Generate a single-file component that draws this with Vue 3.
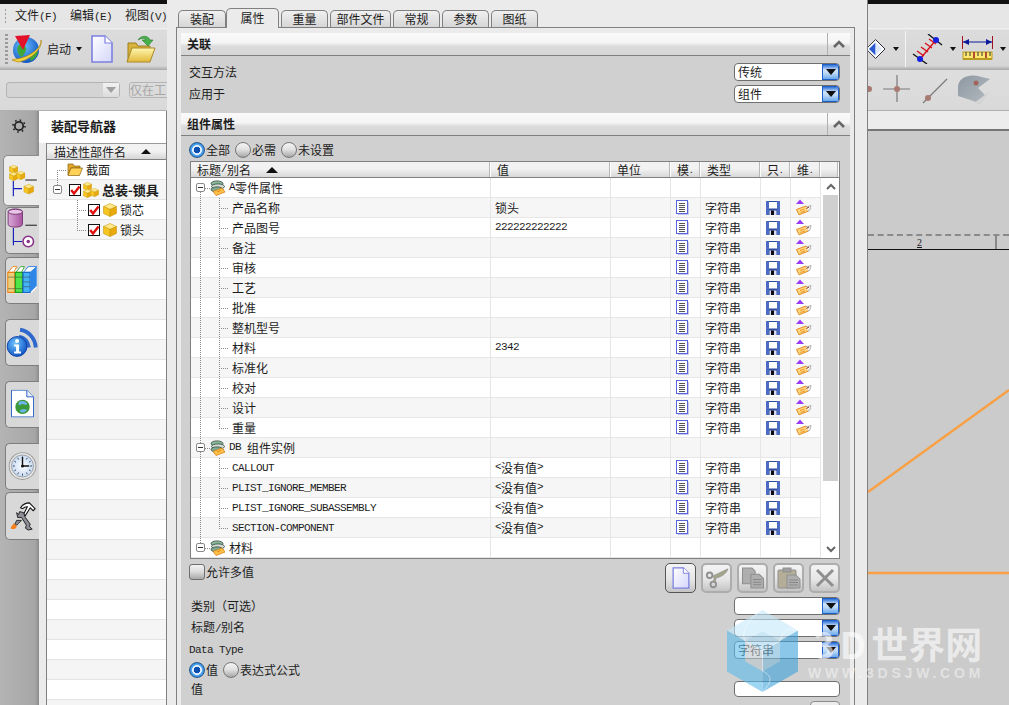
<template>
  <div class="app">
    <!-- 图标定义 -->
    <svg class="defs" aria-hidden="true">
      <defs>
        <linearGradient id="gPage" x1="0" y1="0" x2="1" y2="1"><stop offset="0" stop-color="#fff" /><stop offset="1" stop-color="#d4d6fa" /></linearGradient>
        <linearGradient id="gFolder" x1="0" y1="0" x2="0" y2="1"><stop offset="0" stop-color="#fff7b0" /><stop offset="1" stop-color="#e2b93a" /></linearGradient>
        <radialGradient id="gGlobe" cx=".4" cy=".35" r=".7"><stop offset="0" stop-color="#6fc4ff" /><stop offset="1" stop-color="#0b4fc0" /></radialGradient>
        <radialGradient id="gFace" cx=".5" cy=".5" r=".6"><stop offset="0" stop-color="#fff" /><stop offset="1" stop-color="#bcd2f0" /></radialGradient>
        <linearGradient id="gCyl" x1="0" y1="0" x2="1" y2="0"><stop offset="0" stop-color="#d9a9d6" /><stop offset="1" stop-color="#a8559f" /></linearGradient>
        <linearGradient id="gSurf" x1="0" y1="0" x2="1" y2="1"><stop offset="0" stop-color="#8e98a2" /><stop offset="1" stop-color="#b4bac0" /></linearGradient>
      </defs>
      <symbol id="cube" viewBox="0 0 14 14">
        <path d="M7 .5 13.5 3.5 7 6.5.5 3.5z" fill="#ffe98a" stroke="#c99a10" stroke-width=".6" />
        <path d="M.5 3.5 7 6.5V13.5L.5 10.5z" fill="#f7c51f" stroke="#c99a10" stroke-width=".6" />
        <path d="M13.5 3.5 7 6.5V13.5L13.5 10.5z" fill="#e9a90c" stroke="#c99a10" stroke-width=".6" />
      </symbol>
      <symbol id="asm" viewBox="0 0 16 16">
        <use href="#cube" x="0" y="0" width="9" height="9" />
        <use href="#cube" x="0" y="7" width="9" height="9" />
        <use href="#cube" x="7" y="6" width="9" height="9" />
      </symbol>
      <symbol id="folderOpen" viewBox="0 0 16 13">
        <path d="M1 1h5l1 2h6v2H4L1 12z" fill="#e2a62a" stroke="#8a6410" stroke-width=".7" />
        <path d="M4 5h11.5L12.5 12.5H1z" fill="#ffd257" stroke="#8a6410" stroke-width=".7" />
      </symbol>
      <symbol id="check" viewBox="0 0 12 12">
        <rect x=".5" y=".5" width="11" height="11" fill="#fff" stroke="#111" />
        <path d="M2.2 6 5 9.5 10.5 2.5" fill="none" stroke="#e01010" stroke-width="2.4" />
      </symbol>
      <symbol id="stack" viewBox="0 0 16 16">
        <ellipse cx="7" cy="3.500" rx="6" ry="2.600" fill="#8db79a" stroke="#2f4a3a" stroke-width=".8" />
        <ellipse cx="8" cy="6.500" rx="6.500" ry="2.600" fill="#d4dcd6" stroke="#2f4a3a" stroke-width=".8" />
        <ellipse cx="7" cy="9.500" rx="6" ry="2.600" fill="#7fa98e" stroke="#2f4a3a" stroke-width=".8" />
        <path d="M3 11.500 12 8l3 4-9 3.500z" fill="#fcc24a" stroke="#dc7f14" stroke-width=".8" />
        <path d="M7 12l4-1.600" stroke="#dc7f14" stroke-width=".8" />
      </symbol>
      <symbol id="sheet" viewBox="0 0 13 15">
        <rect x=".5" y=".5" width="11" height="13" fill="#fff" stroke="#5763dc" />
        <path d="M12.500 2v12.500H2" fill="none" stroke="#c4c8ee" />
        <path d="M3 3.500h6M3 5.500h6M3 7.500h6M3 9.500h6M3 11.500h6" stroke="#555" />
      </symbol>
      <symbol id="floppy" viewBox="0 0 14 14">
        <rect width="14" height="14" rx="1" fill="#2e4a9c" />
        <path d="M0 0h3v14H0zM11 0h3v14h-3z" fill="#4c6cc4" />
        <rect x="3" y="1" width="8" height="6.500" fill="#fff" />
        <rect x="3.500" y="9.500" width="7" height="4.500" fill="#d8dcec" />
        <rect x="5" y="9.500" width="3" height="4.500" fill="#0a0a14" />
      </symbol>
      <symbol id="tag" viewBox="0 0 16 17">
        <path d="M4 .5 8 5H0z" fill="#9a3cf6" />
        <path d="M.5 10.500 10 7l2.500 5L3 15.800z" fill="#ffd77e" stroke="#e68a1e" />
        <path d="M4 11.500 8.500 10M4.500 13.500 9 12" stroke="#e68a1e" stroke-width=".8" />
        <path d="M10 8 15 6.500 14 11 12 12" fill="#f4f4f4" stroke="#999" stroke-width=".7" />
        <path d="M10.500 9.500 13 8" stroke="#7a2a10" stroke-width="1" />
      </symbol>
      <symbol id="doc" viewBox="0 0 22 28">
        <path d="M1 1h13l7 7v19H1z" fill="url(#gPage)" stroke="#7c80e0" stroke-width="1.600" />
        <path d="M14 1v7h7" fill="#fff" stroke="#7c80e0" stroke-width="1.200" />
      </symbol>
      <symbol id="start" viewBox="0 0 30 30">
        <circle cx="14" cy="16" r="13" fill="url(#gGlobe)" />
        <path d="M6 12c3-3 7-1 8 2s-2 6-4 9c-3-1-6-6-4-11zM18 20c2-2 6-3 8-2-1 4-3 7-7 9-1-2-2-5-1-7z" fill="#3fa63a" />
        <path d="M29 6c1 7-10 17-25 19l-4 1 6 2C16 27 31 16 29 6z" fill="#f2d33a" stroke="#b48a10" stroke-width=".7" />
        <path d="M3 2 18 1 11 16z" fill="#e3122a" />
      </symbol>
      <symbol id="folderBig" viewBox="0 0 30 30">
        <path d="M2 9h8l2 3h12v15H2z" fill="#d9b23c" stroke="#9c7f22" />
        <path d="M6 14h23l-5 14H1z" fill="url(#gFolder)" stroke="#a98a2a" />
        <path d="M12 6c3-5 10-5 12 0h3l-5 6-6-6h4c-2-2-5-2-8 0z" fill="#48b04a" stroke="#2b7e30" stroke-width=".6" />
      </symbol>
      <symbol id="books" viewBox="0 0 31 29">
        <path d="M0 8 4 4h24l3-1v20l-6 6H0z" fill="#fff" />
        <path d="M1 7 6 1h4L7 7z" fill="#fff" stroke="#e88a20" />
        <path d="M9 7 14 1h4l-3 6z" fill="#fff" stroke="#3aa83a" />
        <path d="M17 7 22 1h9l-7 6z" fill="#fff" stroke="#2f7ce0" />
        <rect x=".5" y="7" width="7.500" height="21" fill="#e9cd78" stroke="#ee7c10" stroke-width="1.200" />
        <rect x="8.500" y="7" width="7.500" height="21" fill="#52e24a" stroke="#1c9a1c" stroke-width="1.200" />
        <rect x="16.500" y="7" width="7.500" height="21" fill="#45b2f4" stroke="#1766c8" stroke-width="1.200" />
        <path d="M24 7 31 1v20l-7 7z" fill="#2f86e6" />
        <path d="M1 12h7M1 24h7M9 12h7M9 24h7M17 12h7M17 17h7M17 22h7" stroke="#333" stroke-width=".5" />
      </symbol>
      <symbol id="info" viewBox="0 0 32 32">
        <path d="M14 4c8 1 15 8 16 18M13 11c5 1 9 5 10 11" fill="none" stroke="#2f68cc" stroke-width="4" />
        <circle cx="11" cy="21" r="10" fill="url(#gGlobe)" stroke="#0c3fa8" />
        <circle cx="11" cy="15.500" r="2" fill="#fff" />
        <path d="M8 19h5v7h2v2H8v-2h2v-5H8z" fill="#fff" />
      </symbol>
      <symbol id="webDoc" viewBox="0 0 24 29">
        <path d="M.5.5h16l7 7v21H.5z" fill="#fff" stroke="#2b62c4" />
        <path d="M16.500.5v7h7" fill="#e4ecfa" stroke="#2b62c4" />
        <circle cx="12" cy="18" r="7.500" fill="#3a9a3a" />
        <path d="M8 13c3-2 8-1 9 2-2 2-3 0-5 0s-2 2-4 1zM9 22c2-2 5-2 8-1-2 3-6 4-8 1z" fill="#6fb4ee" />
      </symbol>
      <symbol id="clock" viewBox="0 0 30 30">
        <circle cx="15" cy="15" r="14.500" fill="#9a9a9a" />
        <circle cx="15" cy="15" r="13.500" fill="#e4e4e4" />
        <circle cx="15" cy="15" r="11.500" fill="url(#gFace)" stroke="#777" stroke-width=".6" />
        <path d="M15 5v2M15 23v2M5 15h2M23 15h2M10 6.500l1 1.700M20 6.500l-1 1.700M6.500 10l1.700 1M23.500 10l-1.700 1M6.500 20l1.700-1M23.500 20l-1.700-1M10 23.500l1-1.700M20 23.500l-1-1.700" stroke="#345" />
        <path d="M15 5.500V15h7" fill="none" stroke="#111" stroke-width="1.500" />
        <circle cx="15" cy="15" r="1.600" fill="#111" />
      </symbol>
      <symbol id="tools" viewBox="0 0 27 31">
        <path d="M20 2c-4 0-7 2-9 5l2 1c2-2 3-2 5-2l-4 8 2 1 5-8 3 3 2-2z" fill="#fff" stroke="#111" stroke-width="1.100" />
        <path d="M7 12l1 5 4 0 5 8-1 3 3 2 4-1-3-3 1-2-5-7-2-5-4-1-1 3-1-1z" fill="#8d8d96" stroke="#111" stroke-width=".9" />
        <path d="M12 20l-3 3-2 2-2-1 2-4z" fill="#8d8d96" stroke="#111" stroke-width=".8" />
        <path d="M1 28c0-2 2-3 3-5 1 2 3 1 3 3s-2 3-4 3-2-1-2-1z" fill="#f6801c" />
      </symbol>
      <symbol id="scissors" viewBox="0 0 26 22">
        <circle cx="5" cy="8" r="3" fill="none" stroke="#8f8f8f" stroke-width="2" />
        <circle cx="9" cy="18" r="3" fill="none" stroke="#8f8f8f" stroke-width="2" />
        <path d="M8 9 25 1c-2 6-8 9-13 10l-1 5-2-1 1-4z" fill="#a4a48a" stroke="#8f8f8f" stroke-width=".7" />
      </symbol>
      <symbol id="copy" viewBox="0 0 22 21">
        <path d="M1 1h9l3 3v12H1z" fill="#aeaeae" stroke="#8f8f8f" />
        <path d="M9 7h8l4 4v9H9z" fill="#aeaeae" stroke="#8f8f8f" />
        <path d="M11 12h8M11 14.500h8M11 17h8" stroke="#888" />
      </symbol>
      <symbol id="paste" viewBox="0 0 24 22">
        <rect x="1" y="3" width="18" height="18" rx="1" fill="#b4ad98" stroke="#8f8f8f" />
        <rect x="6" y="1" width="8" height="4" fill="#9f9f9f" stroke="#8f8f8f" />
        <path d="M10 8h9l4 4v9H10z" fill="#aeaeae" stroke="#8f8f8f" />
        <path d="M12 13h9M12 15.500h9M12 18h9" stroke="#888" />
      </symbol>
    </svg>

    <!-- 左侧:主窗口与导航器 -->
    <section class="side">
      <div class="blackbar"></div>
      <div class="menu">
        <i class="grip"></i>
        <span>文件<b class="lat">(F)</b></span>
        <span>编辑<b class="lat">(E)</b></span>
        <span>视图<b class="lat">(V)</b></span>
      </div>
      <div class="toolbar">
        <i class="grip tall"></i>
        <svg class="ic-start"><use href="#start" /></svg>
        <span class="start-label">启动</span>
        <i class="caret"></i>
        <svg class="ic-doc"><use href="#doc" /></svg>
        <svg class="ic-folder"><use href="#folderBig" /></svg>
      </div>
      <div class="filter">
        <div class="dis-combo"><i class="dis-btn"></i></div>
        <div class="dis-text">仅在工</div>
      </div>

      <div class="nav">
        <div class="nav-tabs">
          <svg class="gear" viewBox="0 0 14 14">
            <circle cx="7" cy="7" r="4.200" fill="none" stroke="#222" stroke-width="1.800" />
            <circle cx="7" cy="7" r="6" fill="none" stroke="#222" stroke-width="1.600" stroke-dasharray="1.600 3.100" />
          </svg>
          <div class="vtab active">
            <svg viewBox="0 0 36 51">
              <use href="#asm" x="5" y="9" width="17" height="17" />
              <path d="M22 25h12" stroke="#111" />
              <path d="M9.500 26v16M9.500 34h9" stroke="#1420b8" stroke-width="1.200" />
              <use href="#cube" x="20" y="29" width="11" height="11" />
            </svg>
          </div>
          <div class="vtab">
            <svg viewBox="0 0 34 47">
              <path d="M2 4c0-4 15-4 15 0v13c0 4-15 4-15 0z" fill="url(#gCyl)" stroke="#7a3a78" />
              <ellipse cx="9.500" cy="4" rx="7.500" ry="2.600" fill="#e8c4e6" stroke="#7a3a78" />
              <path d="M20 18h12" stroke="#111" />
              <path d="M7.500 21v18M7.500 35h9" stroke="#1420b8" stroke-width="1.200" />
              <circle cx="23" cy="35" r="5.500" fill="#fff" stroke="#8a2f88" stroke-width="1.600" />
              <circle cx="23" cy="35" r="1.800" fill="#8a2f88" />
            </svg>
          </div>
          <div class="vtab"><svg viewBox="0 0 34 47"><use href="#books" x="1" y="8" width="31" height="29" /></svg></div>
          <div class="vtab gap"><svg viewBox="0 0 34 47"><use href="#info" x="0" y="6" width="33" height="33" /></svg></div>
          <div class="vtab gap"><svg viewBox="0 0 34 47"><use href="#webDoc" x="5" y="8" width="24" height="29" /></svg></div>
          <div class="vtab gap"><svg viewBox="0 0 34 47"><use href="#clock" x="2" y="8" width="30" height="30" /></svg></div>
          <div class="vtab tight"><svg viewBox="0 0 34 47"><use href="#tools" x="4" y="8" width="27" height="31" /></svg></div>
        </div>

        <div class="nav-panel">
          <div class="nav-title">装配导航器</div>
          <div class="nav-body">
            <div class="nav-table">
              <div class="nav-head">描述性部件名<i class="sort"></i></div>
              <div class="nav-row node-section">
                <svg class="ic-open"><use href="#folderOpen" /></svg>
                <span>截面</span>
              </div>
              <div class="nav-row alt node-root">
                <i class="minus"></i>
                <svg class="ic-check root-check"><use href="#check" /></svg>
                <svg class="ic-asm"><use href="#asm" /></svg>
                <strong>总装-锁具</strong>
              </div>
              <div class="nav-row node-leaf">
                <svg class="ic-check"><use href="#check" /></svg>
                <svg class="ic-cube"><use href="#cube" /></svg>
                <span>锁芯</span>
              </div>
              <div class="nav-row alt node-leaf end">
                <svg class="ic-check"><use href="#check" /></svg>
                <svg class="ic-cube"><use href="#cube" /></svg>
                <span>锁头</span>
              </div>
              <div v-for="n in 24" :key="n" class="nav-row" :class="{ alt: n % 2 === 0 }"></div>
            </div>
          </div>
        </div>
      </div>
    </section>

    <!-- 中间:属性对话框 -->
    <section class="dialog">
      <div class="tabs">
        <div v-for="tab in tabs" :key="tab" class="tab" :class="{ on: tab === '属性', wide: tab.length > 2 }">{{ tab }}</div>
      </div>
      <div class="frame">
        <div class="sec-head">
          <span>关联</span>
          <div class="chev"><svg viewBox="0 0 12 8"><path d="M1 7 6 2l5 5" fill="none" stroke="#666" stroke-width="2.600" /></svg></div>
        </div>
        <div class="sec-assoc">
          <div class="form-row">
            <span>交互方法</span>
            <div class="combo"><span>传统</span><i class="combo-btn"></i></div>
          </div>
          <div class="form-row">
            <span>应用于</span>
            <div class="combo"><span>组件</span><i class="combo-btn"></i></div>
          </div>
        </div>
        <div class="sec-head">
          <span>组件属性</span>
          <div class="chev"><svg viewBox="0 0 12 8"><path d="M1 7 6 2l5 5" fill="none" stroke="#666" stroke-width="2.600" /></svg></div>
        </div>
        <div class="sec-attrs">
          <div class="radios">
            <label><i class="radio on"></i>全部</label>
            <label><i class="radio"></i>必需</label>
            <label><i class="radio"></i>未设置</label>
          </div>

          <div class="table">
            <div class="thead">
              <div class="th">标题<b class="lat">/</b>别名<i class="sort big"></i></div>
              <div class="th">值</div>
              <div class="th">单位</div>
              <div class="th">模<b class="dot">.</b></div>
              <div class="th">类型</div>
              <div class="th">只<b class="dot">.</b></div>
              <div class="th">维<b class="dot">.</b></div>
              <div class="th"></div>
            </div>
            <div class="tbody">
              <div class="rows">
                <div v-for="(row, i) in rows" :key="i" class="row" :class="{ alt: i % 2 === 1 }">
                  <div v-if="row.group" class="cell title group" :class="{ first: i === 0, last: i === rows.length - 1 }">
                    <i class="minus"></i>
                    <svg class="ic-stack"><use href="#stack" /></svg>
                    <b v-if="row.prefix" class="lat">{{ row.prefix }}</b>{{ row.name }}
                  </div>
                  <div v-else class="cell title child" :class="{ last: row.last, lat: row.latin }">{{ row.name }}</div>
                  <div class="cell value">
                    <template v-if="row.none"><b class="lat">&lt;</b>没有值<b class="lat">&gt;</b></template>
                    <template v-else-if="row.value && /^\d+$/.test(row.value)"><b class="lat">{{ row.value }}</b></template>
                    <template v-else>{{ row.value }}</template>
                  </div>
                  <div class="cell"></div>
                  <div class="cell center"><svg v-if="!row.group" class="ic-sheet"><use href="#sheet" /></svg></div>
                  <div class="cell type">{{ row.group ? '' : '字符串' }}</div>
                  <div class="cell center"><svg v-if="!row.group" class="ic-floppy"><use href="#floppy" /></svg></div>
                  <div class="cell center"><svg v-if="!row.group && !row.latin" class="ic-tag"><use href="#tag" /></svg></div>
                </div>
              </div>
              <div class="scroll">
                <div class="sbtn"><svg viewBox="0 0 10 7"><path d="M1 6 5 2l4 4" fill="none" stroke="#666" stroke-width="2" /></svg></div>
                <div class="thumb"></div>
                <div class="sbtn"><svg viewBox="0 0 10 7"><path d="M1 1l4 4 4-4" fill="none" stroke="#666" stroke-width="2" /></svg></div>
              </div>
            </div>
          </div>

          <div class="actions">
            <label class="multi"><i class="checkbox"></i>允许多值</label>
            <div class="btns">
              <div class="tbtn lead"><svg class="ic-b-doc"><use href="#doc" /></svg></div>
              <div class="tbtn"><svg class="ic-b"><use href="#scissors" /></svg></div>
              <div class="tbtn"><svg class="ic-b"><use href="#copy" /></svg></div>
              <div class="tbtn"><svg class="ic-b"><use href="#paste" /></svg></div>
              <div class="tbtn">
                <svg class="ic-b" viewBox="0 0 22 22"><path d="M3 3l16 16M19 3 3 19" stroke="#8f8f8f" stroke-width="3" /></svg>
              </div>
            </div>
          </div>

          <div class="form-row tight">
            <span>类别（可选）</span>
            <div class="combo"><i class="combo-btn"></i></div>
          </div>
          <div class="form-row tight">
            <span>标题<b class="lat">/</b>别名</span>
            <div class="combo"><i class="combo-btn"></i></div>
          </div>
          <div class="form-row tight">
            <span class="lat datatype">Data Type</span>
            <div class="combo"><span>字符串</span><i class="combo-btn"></i></div>
          </div>
          <div class="radios second">
            <label><i class="radio on"></i>值</label>
            <label><i class="radio"></i>表达式公式</label>
          </div>
          <div class="form-row input-row">
            <span>值</span>
            <div class="combo plain"></div>
          </div>
          <div class="bottom-btn-row"><div class="bottom-btn"></div></div>
        </div>
      </div>
    </section>

    <!-- 右侧:绘图区 -->
    <section class="side right">
      <div class="blackbar"></div>
      <div class="menu"></div>
      <div class="toolbar rt">
        <svg class="ic-diamond" viewBox="0 0 18 20">
          <path d="M8 0 18 10 8 20-2 10z" fill="#fff" stroke="#223" />
          <path d="M8 3v14L1 10z" fill="#2c5ad0" />
          <path d="M8 3 15 10 8 17z" fill="#dfe8fb" />
        </svg>
        <i class="caret c1"></i>
        <i class="sep"></i>
        <svg class="ic-rule" viewBox="0 0 31 30">
          <path d="M1 20 15 30M16 0 30 11" stroke="#111" stroke-width="1.300" />
          <path d="M8 25 24 6M5 17l7 5M9 13l7 5M13 9l7 5M17 5l7 5" stroke="#d8101c" stroke-width="1.400" />
          <circle cx="8" cy="25" r="3" fill="#1420e0" />
          <circle cx="24" cy="6" r="3" fill="#1420e0" />
        </svg>
        <i class="caret c2"></i>
        <svg class="ic-dim" viewBox="0 0 31 29">
          <path d="M.5 1v13M30.500 1v13" stroke="#a01020" />
          <path d="M1 7h29" stroke="#0a1a9a" />
          <path d="M1 7 7 4v6zM30 7l-6-3v6z" fill="#0a1a9a" />
          <rect x="1" y="17" width="29" height="7" fill="#ffe770" stroke="#b89a20" />
          <path d="M1 24h29" stroke="#b89a20" stroke-width="2" />
          <path d="M4 17v4M8 17v4M12 17v6M16 17v4M20 17v4M24 17v6M28 17v4" stroke="#333" />
          <path d="M12 17v6M24 17v6" stroke="#d01010" />
        </svg>
        <i class="caret c2"></i>
      </div>
      <div class="filter rt">
        <svg class="snap" viewBox="0 0 141 41">
          <circle cx="1" cy="19" r="3" fill="#a87a72" />
          <path d="M15 19h27M29 5v27M55 33 79 9" stroke="#7a7a7a" stroke-width="1.200" />
          <circle cx="29" cy="19" r="3" fill="#a87a72" />
          <circle cx="60" cy="28" r="3" fill="#a87a72" />
          <path d="M90 16c1-8 10-12 20-10 3 1 8 2 12 3l-12 9 8 8-6 8c-8-4-16-6-22-8z" fill="url(#gSurf)" />
          <path d="M122 21 118 27 112 34 106 33z" fill="#d4d4d4" />
          <circle cx="108" cy="13" r="2.500" fill="#a0665e" />
        </svg>
      </div>
      <div class="strip"></div>
      <div class="canvas">
        <svg class="geometry" viewBox="0 0 141 574">
          <path d="M0 361 141 259" stroke="#f9a044" stroke-width="2.400" fill="none" />
          <path d="M0 442H141" stroke="#f9a044" stroke-width="2.400" fill="none" />
        </svg>
        <div class="ruler">
          <span class="ruler-num">2</span>
          <i class="ruler-tick"></i>
        </div>
      </div>
    </section>

    <!-- 水印 -->
    <div class="watermark">
      <svg class="wm-logo" viewBox="0 0 71 82">
        <g opacity=".6">
          <path d="M0 20.500 35.500 0 71 20.500 53 31 35.500 21 18 31z" fill="#c4e8fb" />
          <path d="M0 20.500 18 31V51L35.500 61V82L0 61.500z" fill="#5cbcec" />
          <path d="M71 20.500V61.500L35.500 82V61L53 51V31z" fill="#3ea2da" />
          <path d="M18 31 35.500 21 53 31 35.500 41z" fill="#a8d8f2" />
          <path d="M18 31 35.500 41V61L18 51z" fill="#bcc8ce" />
          <path d="M53 31 35.500 41V61L53 51z" fill="#7cb8d8" />
        </g>
        <path d="M18 31 35.500 41 53 31M35.500 41V61M35.500 0C20 10 14 22 18 31M71 20.500C60 16 56 22 53 31M35.500 82C45 72 46 66 35.500 61" fill="none" stroke="#fff" stroke-width=".8" opacity=".6" />
      </svg>
      <div class="wm-text">
        <div class="wm-title"><span class="wm-3d">3D</span>世界网</div>
        <div class="wm-url">WWW.3DSJW.COM</div>
      </div>
    </div>
  </div>
</template>

<script setup>
const tabs = ['装配', '属性', '重量', '部件文件', '常规', '参数', '图纸']

const partAttrs = ['产品名称', '产品图号', '备注', '审核', '工艺', '批准', '整机型号', '材料', '标准化', '校对', '设计', '重量']
const partValues = { 产品名称: '锁头', 产品图号: '222222222222', 材料: '2342' }
const instanceAttrs = ['CALLOUT', 'PLIST_IGNORE_MEMBER', 'PLIST_IGNORE_SUBASSEMBLY', 'SECTION-COMPONENT']

const rows = [
  { group: true, prefix: 'A', name: '零件属性' },
  ...partAttrs.map((name, i) => ({ name, value: partValues[name], last: i === partAttrs.length - 1 })),
  { group: true, prefix: 'DB ', name: '组件实例' },
  ...instanceAttrs.map((name, i) => ({ name, latin: true, none: true, last: i === instanceAttrs.length - 1 })),
  { group: true, name: '材料' }
]
</script>

<style scoped>
.app {
  --dots-v: repeating-linear-gradient(to bottom, #8a8a8a 0 1px, transparent 1px 2px);
  --dots-h: repeating-linear-gradient(to right, #8a8a8a 0 1px, transparent 1px 2px);
  position: relative;
  display: grid;
  grid-template-columns: 167px 701px 141px;
  width: 1009px;
  height: 705px;
  overflow: hidden;
  font-family: "Noto Sans CJK SC", "Liberation Sans", sans-serif;
  font-size: 12px;
  line-height: 1;
  color: #1c1c1c;
  background: #ebebeb;
}

.defs {
  position: absolute;
  width: 0;
  height: 0;
}

svg {
  display: block;
  flex-shrink: 0;
}

.lat {
  font-family: "Liberation Mono", "DejaVu Sans Mono", monospace;
  font-size: 11px;
  font-weight: 400;
  letter-spacing: -0.6px;
}

/* 左右共用的顶部栏 */
.side {
  display: flex;
  flex-direction: column;
  min-width: 0;
  overflow: hidden;
}

.blackbar {
  height: 4px;
  background: #111;
  flex-shrink: 0;
}

.menu {
  display: flex;
  align-items: center;
  gap: 13px;
  height: 24px;
  flex-shrink: 0;
  padding-left: 5px;
  background: #e6e6e6;
  white-space: nowrap;
}

.menu span:first-of-type {
  margin-left: -10px;
}

.grip {
  width: 3px;
  height: 15px;
  margin-right: 6px;
  background: repeating-linear-gradient(to bottom, #9a9a9a 0 2px, transparent 2px 4px);
}

.grip.tall {
  height: 30px;
  margin: 0;
}

.toolbar {
  display: flex;
  align-items: center;
  height: 42px;
  flex-shrink: 0;
  padding-left: 5px;
  background: linear-gradient(#f0f0f0 0 1px, #dcdcdc 2px, #d6d6d6 90%, #a8a8a8);
  white-space: nowrap;
}

.ic-start {
  width: 30px;
  height: 30px;
  margin-left: 4px;
}

.start-label {
  margin-left: 5px;
}

.caret {
  width: 0;
  height: 0;
  margin-left: 5px;
  border: 3px solid transparent;
  border-top: 4px solid #111;
  border-bottom: 0;
}

.ic-doc {
  width: 22px;
  height: 28px;
  margin-left: 9px;
}

.ic-folder {
  width: 30px;
  height: 30px;
  margin-left: 13px;
}

.filter {
  display: flex;
  align-items: center;
  height: 41px;
  flex-shrink: 0;
  padding-left: 6px;
  background: linear-gradient(#dedede, #d9d9d9);
  border-bottom: 1px solid #b0b0b0;
  box-sizing: border-box;
}

.dis-combo {
  display: flex;
  justify-content: flex-end;
  width: 114px;
  height: 16px;
  flex-shrink: 0;
  box-sizing: border-box;
  border: 1px solid #b4b4b4;
  border-radius: 3px;
  background: #d4d4d4;
}

.dis-btn {
  width: 16px;
  background: linear-gradient(#f2f2f2, #dcdcdc);
}

.dis-btn::after {
  content: "";
  display: block;
  width: 0;
  margin: 4px auto 0;
  border: 5px solid transparent;
  border-top: 6px solid #a0a0a0;
  border-bottom: 0;
}

.dis-text {
  margin-left: 9px;
  width: 42px;
  height: 16px;
  line-height: 14px;
  flex-shrink: 0;
  box-sizing: border-box;
  border: 1px solid #b4b4b4;
  border-radius: 3px;
  color: #a6a6a6;
  white-space: nowrap;
}

/* 导航器 */
.nav {
  display: flex;
  flex: 1;
  min-height: 0;
}

.nav-tabs {
  width: 39px;
  flex-shrink: 0;
  padding-top: 8px;
  box-sizing: border-box;
  background: linear-gradient(to right, #b4b4b4, #a6a6a6 90%, #8c8c8c);
}

.gear {
  width: 14px;
  height: 14px;
  margin: 0 0 22px 12px;
}

.vtab {
  width: 34px;
  height: 47px;
  margin-left: 5px;
  box-sizing: border-box;
  border: 1px solid #7d7d7d;
  border-right: 0;
  border-radius: 5px 0 0 5px;
  background: #d8d8d8;
  margin-top: 1px;
}

.vtab + .vtab {
  margin-top: 3px;
}

.vtab svg {
  width: 100%;
  height: 100%;
}

.vtab.active {
  width: 36px;
  height: 51px;
  margin: 0 0 0 3px;
  background: #ececec;
  border-color: #8c8c8c;
}

.vtab.active + .vtab {
  margin-top: 1px;
}

.vtab.gap {
  margin-top: 15px;
}

.vtab.tight {
  height: 48px;
  margin-top: 2px;
}

.nav-panel {
  flex: 1;
  display: flex;
  flex-direction: column;
  min-width: 0;
  background: #fff;
  border-right: 1px solid #808080;
}

.nav-title {
  height: 32px;
  line-height: 30px;
  padding-left: 12px;
  font-size: 13px;
  font-weight: 700;
  white-space: nowrap;
  flex-shrink: 0;
}

.nav-body {
  flex: 1;
  min-height: 0;
  padding-left: 7px;
  background: #ebebeb;
}

.nav-table {
  height: 100%;
  overflow: hidden;
  background: #fff;
  border-left: 1px solid #808080;
}

.nav-head {
  display: flex;
  align-items: center;
  height: 17px;
  box-sizing: border-box;
  padding-left: 7px;
  border-top: 1px solid #9a9a9a;
  border-bottom: 1px solid #808080;
  background: linear-gradient(#f2f2f2, #f2f2f2 45%, #d6d6d6);
  white-space: nowrap;
}

.sort {
  width: 0;
  height: 0;
  margin-left: 15px;
  border: 5px solid transparent;
  border-bottom: 5px solid #111;
  border-top: 0;
}

.sort.big {
  margin-left: 15px;
  border-width: 0 6px 6px;
}

.nav-row {
  display: flex;
  align-items: center;
  height: 20px;
  box-sizing: border-box;
  border-bottom: 1px solid #e4e4e4;
  background-color: #fff;
  white-space: nowrap;
  background-repeat: no-repeat;
}

.nav-row.alt {
  background-color: #f5f5f5;
}

.node-section {
  padding-left: 20px;
  background-image: var(--dots-h), var(--dots-v);
  background-position: 10px 10px, 10px 10px;
  background-size: 10px 1px, 1px 10px;
}

.ic-open {
  width: 16px;
  height: 13px;
  margin-right: 3px;
}

.node-root {
  padding-left: 6px;
  background-image: var(--dots-v);
  background-position: 10px 0;
  background-size: 1px 6px;
}

.node-root .minus {
  margin-right: 7px;
}

.root-check {
  margin-right: 2px;
}

.ic-asm {
  width: 16px;
  height: 16px;
  margin-right: 3px;
}

.node-root strong {
  font-size: 13px;
  font-weight: 700;
}

.node-leaf {
  padding-left: 41px;
  background-image: var(--dots-h), var(--dots-v);
  background-position: 30px 10px, 30px 0;
  background-size: 10px 1px, 1px 100%;
}

.node-leaf.end {
  background-size: 10px 1px, 1px 10px;
}

.ic-check {
  width: 12px;
  height: 12px;
}

.ic-cube {
  width: 14px;
  height: 14px;
  margin: 0 3px;
}

.minus {
  display: block;
  width: 9px;
  height: 9px;
  flex-shrink: 0;
  box-sizing: border-box;
  border: 1px solid #8a8a8a;
  border-radius: 2px;
  background: #fff;
}

.minus::after {
  content: "";
  display: block;
  height: 1px;
  margin: 3px 1px 0;
  background: #333;
}

/* 对话框 */
.dialog {
  display: flex;
  flex-direction: column;
  min-width: 0;
  padding: 8px 12px 0 9px;
  border-right: 1px solid #808080;
  background: #ebebeb;
  overflow: hidden;
}

.tabs {
  display: flex;
  align-items: flex-end;
  height: 19px;
  flex-shrink: 0;
  padding-left: 2px;
}

.tab {
  height: 17px;
  line-height: 15px;
  padding: 0 10.5px;
  margin-left: 2px;
  box-sizing: border-box;
  border: 1px solid #808080;
  border-bottom: 0;
  border-radius: 5px 5px 0 0;
  background: linear-gradient(#f0f0f0, #d6d6d6);
  white-space: nowrap;
}

.tab:first-child {
  margin-left: 0;
  padding: 0 11px;
}

.tab.wide {
  padding: 0 5.5px;
}

.tab.on {
  position: relative;
  z-index: 1;
  height: 20px;
  line-height: 17px;
  margin-left: 0;
  margin-bottom: -1px;
  padding: 0 13.5px;
  background: #ebebeb;
}

.frame {
  flex: 1;
  min-height: 0;
  display: flex;
  flex-direction: column;
  padding: 5px 4px 0;
  border: 1px solid #808080;
  border-bottom: 0;
}

.sec-head {
  display: flex;
  align-items: center;
  justify-content: space-between;
  height: 23px;
  flex-shrink: 0;
  box-sizing: border-box;
  padding-left: 6px;
  border-bottom: 1px solid #808080;
  background: linear-gradient(#fafafa, #f4f4f4 45%, #dcdcdc 60%, #d6d6d6);
  font-weight: 700;
}

.chev {
  display: flex;
  align-items: center;
  justify-content: center;
  width: 23px;
  height: 100%;
  box-sizing: border-box;
  border-left: 1px solid #b0b0b0;
}

.chev svg {
  width: 12px;
  height: 8px;
}

.sec-assoc {
  display: flex;
  flex-direction: column;
  gap: 4px;
  height: 57px;
  flex-shrink: 0;
  box-sizing: border-box;
  padding: 7px 10px 0 8px;
  background: #d0d0d0;
}

.form-row {
  display: flex;
  align-items: center;
  justify-content: space-between;
  height: 18px;
}

.combo {
  display: flex;
  align-items: center;
  width: 106px;
  height: 18px;
  box-sizing: border-box;
  padding-left: 3px;
  border: 1px solid #6f6f6f;
  border-radius: 4px;
  background: #fff;
  overflow: hidden;
}

.combo.plain {
  height: 16px;
}

.combo span {
  flex: 1;
}

.combo-btn {
  width: 17px;
  height: 100%;
  margin-left: auto;
  flex-shrink: 0;
  box-sizing: border-box;
  border: 1px solid #1f5fc8;
  background: linear-gradient(#2f72d8, #cfe3fa 35%, #bcd8f6 60%, #6aa8ea);
}

.combo-btn::after {
  content: "";
  display: block;
  width: 0;
  margin: 4px auto 0;
  border: 5.5px solid transparent;
  border-top: 6px solid #111;
  border-bottom: 0;
}

.sec-attrs {
  flex: 1;
  min-height: 0;
  display: flex;
  flex-direction: column;
  padding: 6px 10px 0 8px;
  background: #d0d0d0;
}

.radios {
  display: flex;
  align-items: center;
  gap: 5px;
  height: 16px;
  flex-shrink: 0;
  margin-bottom: 3px;
}

.radios label {
  display: flex;
  align-items: center;
  gap: 1px;
}

.radio {
  display: block;
  width: 16px;
  height: 16px;
  box-sizing: border-box;
  border: 1px solid #777;
  border-radius: 50%;
  background: linear-gradient(#f4f4f4, #e2e2e2 45%, #a8a8a8);
}

.radio.on {
  border-color: #2a5a8e;
  background: radial-gradient(circle, #0c4fae 0 3px, #e8f3ff 3.6px 4.6px, #58aaf0 5.2px, #1f78cc 8px);
}

.table {
  flex-shrink: 0;
  margin-left: 1px;
  border: 1px solid #808080;
  background: #fff;
}

.thead,
.row {
  display: grid;
  grid-template-columns: 300px 120px 60px 30px 60px 30px 30px;
}

.thead {
  grid-template-columns: 300px 120px 60px 30px 60px 30px 30px 18px;
  height: 16px;
  box-sizing: border-box;
  border-bottom: 1px solid #808080;
  background: linear-gradient(#f2f2f2, #f2f2f2 45%, #d8d8d8);
}

.th {
  display: flex;
  align-items: center;
  padding-left: 6px;
  box-sizing: border-box;
  border-right: 1px solid #fff;
  box-shadow: inset -1px 0 0 #b8b8b8;
  white-space: nowrap;
}

.dot {
  font-weight: 400;
  font-size: 9px;
  margin-left: 1px;
}

.tbody {
  display: flex;
}

.rows {
  width: 630px;
  flex-shrink: 0;
}

.row {
  height: 20px;
  background: #fff;
}

.row.alt {
  background: #f6f6f6;
}

.cell {
  display: flex;
  align-items: center;
  box-sizing: border-box;
  border-right: 1px solid #e6e6e6;
  border-bottom: 1px solid #e6e6e6;
  white-space: pre;
  background-repeat: no-repeat;
}

.title.child {
  padding-left: 41px;
  background-image: var(--dots-v), var(--dots-v), var(--dots-h);
  background-position: 9px 0, 28px 0, 28px 10px;
  background-size: 1px 100%, 1px 100%, 10px 1px;
}

.title.child.lat {
  padding-top: 2px;
}

.title.child.last {
  background-size: 1px 100%, 1px 10px, 10px 1px;
}

.title.group {
  padding-left: 5px;
  background-image: var(--dots-v), var(--dots-h);
  background-position: 9px 0, 14px 10px;
  background-size: 1px 100%, 6px 1px;
}

.title.group.first {
  background-position: 9px 10px, 14px 10px;
}

.title.group.last {
  background-size: 1px 10px, 6px 1px;
}

.ic-stack {
  width: 16px;
  height: 16px;
  margin: 0 3px 0 5px;
}

.value {
  padding-left: 4px;
}

.type {
  padding-left: 4px;
}

.center {
  justify-content: flex-start;
  padding-left: 5px;
}

.ic-sheet {
  width: 13px;
  height: 15px;
}

.ic-floppy {
  width: 14px;
  height: 14px;
}

.ic-tag {
  width: 16px;
  height: 17px;
}

.scroll {
  display: flex;
  flex-direction: column;
  width: 18px;
  box-sizing: border-box;
  padding-left: 2px;
  padding-right: 1px;
}

.sbtn {
  display: flex;
  align-items: center;
  justify-content: center;
  height: 17px;
  flex-shrink: 0;
}

.sbtn svg {
  width: 10px;
  height: 7px;
}

.thumb {
  height: 286px;
  background: #d0d0d0;
}

.sbtn:last-child {
  margin-top: auto;
}

.actions {
  display: flex;
  justify-content: space-between;
  height: 30px;
  margin-top: 4px;
  flex-shrink: 0;
}

.multi {
  display: flex;
  align-items: flex-start;
  gap: 1px;
  line-height: 16px;
  margin-top: 1px;
}

.checkbox {
  display: block;
  width: 16px;
  height: 16px;
  box-sizing: border-box;
  border: 1px solid #6f6f6f;
  border-radius: 3px;
  background: linear-gradient(#f2f2f2, #dedede 45%, #a8a8a8);
}

.btns {
  display: flex;
  gap: 5px;
}

.tbtn {
  display: flex;
  align-items: center;
  justify-content: center;
  width: 31px;
  height: 30px;
  box-sizing: border-box;
  border: 2px solid #adadad;
  border-radius: 5px;
  background: linear-gradient(#f4f4f4, #e6e6e6 55%, #c4c4c4);
}

.tbtn.lead {
  border: 1px solid #555;
}

.ic-b {
  width: 24px;
  height: 22px;
}

.ic-b-doc {
  width: 18px;
  height: 22px;
}

.form-row.tight {
  margin-top: 4px;
  margin-left: 2px;
}

.datatype {
  margin-left: -2px;
}

.radios.second {
  margin: 3px 0 0;
}

.input-row {
  height: 16px;
  margin: 3px 0 0 2px;
}

.bottom-btn-row {
  display: flex;
  justify-content: flex-end;
  margin-top: 4px;
}

.bottom-btn {
  width: 30px;
  height: 16px;
  box-sizing: border-box;
  border: 1px solid #8a8a8a;
  border-radius: 4px;
  background: #ececec;
}

/* 右侧工具条 */
.toolbar.rt {
  padding-left: 0;
}

.ic-diamond {
  width: 17px;
  height: 20px;
}

.c1 {
  margin-left: 8px;
}

.c2 {
  margin-left: 7px;
}

.sep {
  width: 1px;
  height: 36px;
  margin-left: 6px;
  background: #f4f4f4;
}

.ic-rule {
  width: 31px;
  height: 30px;
  margin-left: 6px;
}

.ic-dim {
  width: 31px;
  height: 29px;
  margin-left: 6px;
}

.filter.rt {
  padding-left: 0;
}

.snap {
  width: 141px;
  height: 41px;
}

.strip {
  height: 20px;
  flex-shrink: 0;
  box-sizing: border-box;
  background: #ececec;
  border-bottom: 2px solid #757575;
}

.canvas {
  position: relative;
  flex: 1;
  min-height: 0;
  background: #cbcbcb;
}

.geometry {
  position: absolute;
  inset: 0;
  width: 141px;
  height: 574px;
}

.ruler {
  display: flex;
  align-items: center;
  height: 16px;
  box-sizing: border-box;
  margin-top: 103px;
  border-top: 2px dashed #8a8a8a;
  border-bottom: 1px solid #111;
}

.ruler-num {
  margin-left: 49px;
  font-family: "Liberation Serif", serif;
  font-size: 10px;
  text-decoration: underline;
}

.ruler-tick {
  width: 2px;
  height: 100%;
  margin-left: 73px;
  background: #888;
}

/* 水印覆盖层 */
.watermark {
  position: absolute;
  left: 727px;
  top: 610px;
  display: flex;
  pointer-events: none;
}

.wm-logo {
  width: 71px;
  height: 82px;
}

.wm-text {
  margin: 12px 0 0 12px;
  color: #fff;
  opacity: 0.6;
  font-weight: 700;
  white-space: nowrap;
}

.wm-title {
  margin-left: 3px;
  font-size: 37px;
  line-height: 42px;
}

.wm-3d {
  letter-spacing: 5px;
}

.wm-url {
  margin: 2px 0 0 -2px;
  font-family: "Liberation Sans", sans-serif;
  font-size: 14px;
  letter-spacing: 3.8px;
  opacity: 0.75;
}
</style>

<style>
html,
body {
  margin: 0;
  overflow: hidden;
}
</style>
